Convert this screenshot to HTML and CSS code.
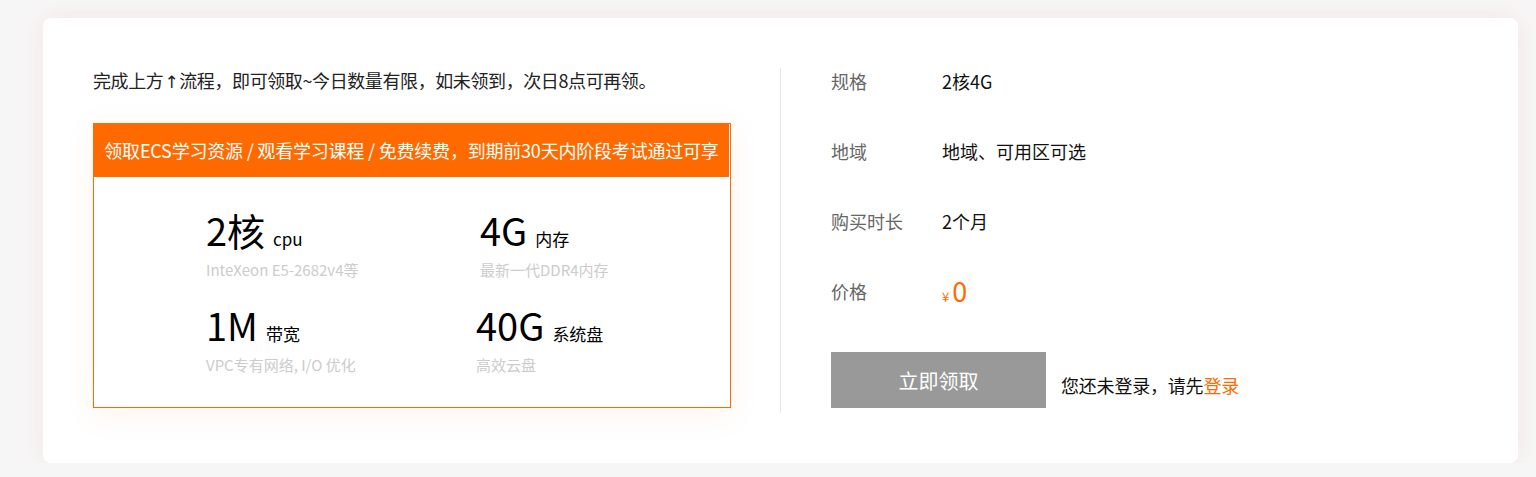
FILE: index.html
```html
<!DOCTYPE html>
<html lang="zh-CN">
<head>
<meta charset="utf-8">
<title>ECS</title>
<link rel="stylesheet" href="styles.css">
</head>
<body>
<div class="card">
  <div class="left">
    <p class="tip">完成上方<span class="arrow">↑</span>流程，即可领取~今日数量有限，如未领到，次日8点可再领。</p>
    <div class="box">
      <div class="box-head">领取ECS学习资源 / 观看学习课程 / 免费续费，到期前30天内阶段考试通过可享</div>
      <div class="specs">
        <div class="spec">
          <div class="num">2核<span class="unit">cpu</span></div>
          <div class="sub">InteXeon E5-2682v4等</div>
        </div>
        <div class="spec">
          <div class="num">4G<span class="unit">内存</span></div>
          <div class="sub">最新一代DDR4内存</div>
        </div>
        <div class="spec">
          <div class="num">1M<span class="unit">带宽</span></div>
          <div class="sub">VPC专有网络, I/O 优化</div>
        </div>
        <div class="spec spec-shift">
          <div class="num">40G<span class="unit">系统盘</span></div>
          <div class="sub">高效云盘</div>
        </div>
      </div>
    </div>
  </div>
  <div class="right">
    <div class="row"><span class="label">规格</span><span class="value">2核4G</span></div>
    <div class="row"><span class="label">地域</span><span class="value">地域、可用区可选</span></div>
    <div class="row"><span class="label">购买时长</span><span class="value">2个月</span></div>
    <div class="row"><span class="label">价格</span><span class="value price"><span class="yen">¥</span><span class="amount">0</span></span></div>
    <div class="actions">
      <button class="btn">立即领取</button>
      <span class="login">您还未登录，请先<a class="login-link">登录</a></span>
    </div>
  </div>
</div>
</body>
</html>
```
FILE: styles.css
```css
* { box-sizing: border-box; }
html, body {
  margin: 0;
  padding: 0;
  background: #f7f6f6;
  font-family: "Noto Sans CJK SC", "Noto Sans", sans-serif;
  color: #333;
}
body { padding-top: 18px; }
.card {
  margin-left: 43px;
  width: 1475px;
  height: 445px;
  background: #fff;
  border-radius: 8px;
  box-shadow: 0 0 24px rgba(225, 160, 160, 0.18);
  padding: 50px 50px;
  display: flex;
}
.left {
  width: 638px;
  margin-right: 49px;
}
.tip {
  margin: 0;
  height: 24px;
  font-size: 18px;
  line-height: 24px;
  color: #222;
  letter-spacing: -0.4px;
  white-space: nowrap;
}
.arrow {
  font-family: "DejaVu Sans", sans-serif;
  font-size: 17px;
  line-height: 0;
  margin: 0 1px;
}
.box {
  margin-top: 31px;
  height: 285px;
  border: 1px solid #ff6a00;
  box-shadow: 0 6px 30px rgba(255, 120, 30, 0.09);
}
.box-head {
  height: 53px;
  margin-right: 1px;
  background: #ff6a00;
  color: #fff;
  font-size: 18px;
  line-height: 53px;
  text-align: center;
  white-space: nowrap;
  letter-spacing: -0.2px;
}
.specs {
  display: grid;
  grid-template-columns: 274px 1fr;
  row-gap: 25px;
  padding: 33px 0 0 112px;
}
.spec-shift { margin-left: -4px; }
.num {
  font-size: 38px;
  line-height: 40px;
  color: #000;
  white-space: nowrap;
}
.unit {
  font-size: 17px;
  margin-left: 8px;
}
.sub {
  font-size: 15px;
  line-height: 21px;
  color: #ccc;
  white-space: nowrap;
}
.right {
  flex: 1;
  border-left: 1px solid #e8e8e8;
  padding-left: 50px;
}
.row {
  display: flex;
  height: 70px;
  font-size: 18px;
  line-height: 26px;
}
.label {
  width: 111px;
  color: #666;
}
.value { color: #111; }
.price {
  color: #ff6a00;
  display: flex;
  align-items: baseline;
  margin-top: -2px;
}
.yen { font-size: 13px; margin-right: 3px; }
.amount { font-size: 27px; line-height: 30px; }
.actions {
  display: flex;
  align-items: flex-end;
  margin-top: 4px;
}
.btn {
  width: 215px;
  height: 56px;
  border: 0;
  background: #999;
  color: #fff;
  font-family: inherit;
  font-size: 20px;
  padding: 0;
  margin-right: 15px;
}
.login {
  font-size: 18px;
  line-height: 24px;
  padding-bottom: 11px;
  color: #111;
  letter-spacing: -0.2px;
}
.login-link { color: #ff6a00; }
```
